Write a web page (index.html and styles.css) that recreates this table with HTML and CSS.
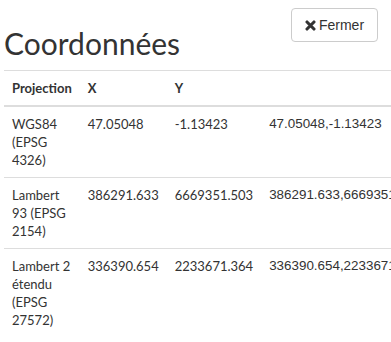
FILE: index.html
```html
<!DOCTYPE html>
<html lang="fr">
<head>
<meta charset="utf-8">
<link rel="stylesheet" href="styles.css">
</head>
<body>
<div class="page">
  <div class="header">
    <h1 class="title">Coordonnées</h1>
    <button class="btn-close" type="button">
      <svg class="icon" viewBox="0 0 12 12" width="11" height="11" aria-hidden="true"><path d="M2.2 2.2 L9.8 9.8 M9.8 2.2 L2.2 9.8" fill="none" stroke="#333" stroke-width="3.4" stroke-linecap="round"/></svg>
      <span>Fermer</span>
    </button>
  </div>
  <table class="coords">
    <thead>
      <tr><th>Projection</th><th>X</th><th>Y</th><th></th></tr>
    </thead>
    <tbody>
      <tr><td>WGS84 (EPSG 4326)</td><td>47.05048</td><td>-1.13423</td><td class="pair">47.05048,-1.13423</td></tr>
      <tr><td>Lambert 93 (EPSG 2154)</td><td>386291.633</td><td>6669351.503</td><td class="pair">386291.633,6669351.503</td></tr>
      <tr><td>Lambert 2 étendu (EPSG 27572)</td><td>336390.654</td><td>2233671.364</td><td class="pair">336390.654,2233671.364</td></tr>
    </tbody>
  </table>
</div>
</body>
</html>
```
FILE: styles.css
```css
html, body {
  margin: 0;
  padding: 0;
  background: #fff;
  overflow: hidden;
}
body {
  font-family: Lato, "Noto Sans", sans-serif;
  font-size: 13px;
  line-height: 18px;
  color: #333;
}
.page {
  padding: 0 4px;
}
.header {
  display: flex;
  justify-content: space-between;
  align-items: flex-start;
}
.title {
  margin: 26px 0 0 0;
  font-size: 30px;
  font-weight: 400;
  line-height: 34px;
  color: #333;
  padding-bottom: 10px;
}
.btn-close {
  margin: 8px 9px 0 0;
  height: 34px;
  width: 87px;
  display: flex;
  align-items: center;
  justify-content: center;
  gap: 3px;
  padding: 0 10px;
  background: #fff;
  border: 1px solid #ccc;
  border-radius: 4px;
  font-family: "Liberation Sans", Arial, sans-serif;
  font-size: 14px;
  color: #333;
}
.icon {
  display: block;
}
.coords {
  border-collapse: collapse;
}
.coords th, .coords td {
  padding: 8px;
  text-align: left;
  vertical-align: top;
  border-top: 1px solid #ddd;
}
.coords th {
  font-weight: 700;
  border-bottom: 2px solid #ddd;
}
.coords td.pair {
  font-family: "Liberation Sans", Arial, sans-serif;
  font-size: 13.4px;
  white-space: nowrap;
}
```
